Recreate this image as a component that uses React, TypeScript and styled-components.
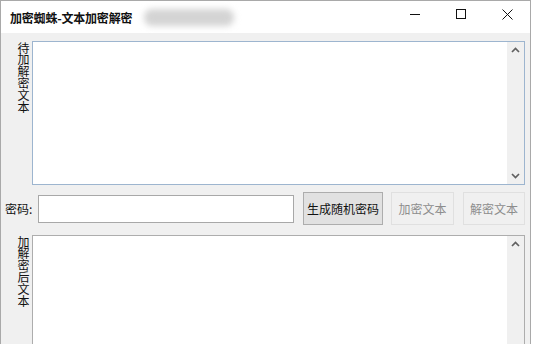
import React from "react";
import styled, { createGlobalStyle } from "styled-components";

const Global = createGlobalStyle`
  html, body { margin: 0; padding: 0; background: #ffffff; }
  body { font-family: "Noto Sans CJK SC", "Noto Sans", sans-serif; }
  * { box-sizing: border-box; }
`;

const Window = styled.div`
  width: 531px;
  height: 344px;
  border: 1px solid #a9a9a9;
  border-bottom: none;
  background: #f0f0f0;
  display: flex;
  flex-direction: column;
  overflow: hidden;
`;

const TitleBar = styled.div`
  height: 32px;
  flex: none;
  background: #ffffff;
  display: flex;
  align-items: center;
`;

const Title = styled.div`
  padding-left: 9px;
  font-size: 12px;
  font-weight: 700;
  color: #111;
  letter-spacing: -0.2px;
  white-space: nowrap;
`;

const Blur = styled.div`
  margin-left: 12px;
  width: 90px;
  height: 17px;
  border-radius: 8px;
  background: #d4d4d4;
  filter: blur(3px);
`;

const Spacer = styled.div`
  flex: 1;
`;

const CtlButton = styled.div`
  width: 46px;
  height: 26px;
  align-self: flex-start;
  display: flex;
  align-items: center;
  justify-content: center;
  color: #111;
`;

const Content = styled.div`
  flex: 1;
  display: flex;
  flex-direction: column;
  padding: 8px 5px 0 0;
`;

const Section = styled.div<{ $h: number }>`
  display: flex;
  height: ${(p) => p.$h}px;
  flex: none;
`;

const VLabel = styled.div`
  width: 31px;
  flex: none;
  display: flex;
  justify-content: flex-end;
  padding-right: 3px;
`;

const VText = styled.span`
  writing-mode: vertical-rl;
  text-orientation: upright;
  font-size: 12px;
  line-height: 12px;
  letter-spacing: -0.2px;
  color: #111;
  padding-top: 1px;
`;

const Box = styled.div<{ $border: string }>`
  flex: 1;
  display: flex;
  border: 1px solid ${(p) => p.$border};
  background: #ffffff;
`;

const Area = styled.textarea`
  flex: 1;
  border: none;
  outline: none;
  resize: none;
  background: transparent;
  font-family: inherit;
  font-size: 12px;
  overflow: hidden;
`;

const ScrollBar = styled.div`
  width: 17px;
  flex: none;
  background: #f0f0f0;
  display: flex;
  flex-direction: column;
  justify-content: space-between;
  align-items: center;
  padding: 5px 0 5px;
  color: #606060;
`;

const Row = styled.div`
  display: flex;
  align-items: center;
  height: 33px;
  margin: 7px 0 10px;
  flex: none;
`;

const RowLabel = styled.span`
  font-size: 12px;
  color: #111;
  padding-left: 4px;
  width: 37px;
  flex: none;
`;

const Input = styled.input`
  width: 256px;
  height: 28px;
  border: 1px solid #a8a8a8;
  background: #fff;
  outline: none;
  flex: none;
`;

const Button = styled.button<{ $w: number; $ml: number; $disabled?: boolean }>`
  width: ${(p) => p.$w}px;
  height: 33px;
  margin-left: ${(p) => p.$ml}px;
  flex: none;
  padding: 0;
  font-family: inherit;
  font-size: 12px;
  color: ${(p) => (p.$disabled ? "#8d8d8d" : "#111")};
  background: ${(p) => (p.$disabled ? "#f0f0f0" : "#e1e1e1")};
  border: 1px solid ${(p) => (p.$disabled ? "#e0e0e0" : "#adadad")};
`;

const Up = () => (
  <svg width="9" height="6" viewBox="0 0 9 6">
    <path d="M1 5 L4.5 1.5 L8 5" fill="none" stroke="currentColor" strokeWidth="1.7" />
  </svg>
);
const Down = () => (
  <svg width="9" height="6" viewBox="0 0 9 6">
    <path d="M1 1 L4.5 4.5 L8 1" fill="none" stroke="currentColor" strokeWidth="1.7" />
  </svg>
);

export default function App() {
  return (
    <>
      <Global />
      <Window>
        <TitleBar>
          <Title>加密蜘蛛-文本加密解密</Title>
          <Blur />
          <Spacer />
          <CtlButton>
            <svg width="10" height="10" viewBox="0 0 10 10">
              <path d="M0 5.5 H10" stroke="currentColor" strokeWidth="1" />
            </svg>
          </CtlButton>
          <CtlButton>
            <svg width="10" height="10" viewBox="0 0 10 10">
              <rect x="0.5" y="0.5" width="9" height="9" fill="none" stroke="currentColor" strokeWidth="1" />
            </svg>
          </CtlButton>
          <CtlButton>
            <svg width="11" height="11" viewBox="0 0 11 11">
              <path d="M0.5 0.5 L10.5 10.5 M10.5 0.5 L0.5 10.5" stroke="currentColor" strokeWidth="1" />
            </svg>
          </CtlButton>
        </TitleBar>
        <Content>
          <Section $h={144}>
            <VLabel>
              <VText>待加解密文本</VText>
            </VLabel>
            <Box $border="#9db5cf">
              <Area />
              <ScrollBar>
                <Up />
                <Down />
              </ScrollBar>
            </Box>
          </Section>
          <Row>
            <RowLabel>密码:</RowLabel>
            <Input />
            <Button $w={80} $ml={9}>生成随机密码</Button>
            <Button $w={63} $ml={8} $disabled>加密文本</Button>
            <Button $w={62} $ml={9} $disabled>解密文本</Button>
          </Row>
          <Section $h={120}>
            <VLabel>
              <VText>加解密后文本</VText>
            </VLabel>
            <Box $border="#adadad">
              <Area />
              <ScrollBar>
                <Up />
                <span />
              </ScrollBar>
            </Box>
          </Section>
        </Content>
      </Window>
    </>
  );
}
